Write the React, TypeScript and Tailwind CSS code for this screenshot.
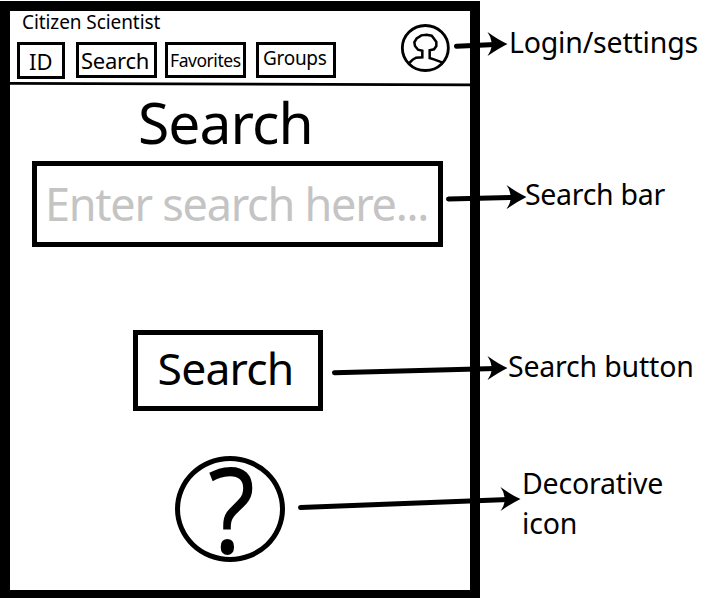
import React from "react";

const navItems = [
  { label: "ID", box: "w-12 h-[37px]", text: "text-[22px] leading-[32px] tracking-[0px] pl-[9px]" },
  { label: "Search", box: "w-[81px] h-9 ml-[11px]", text: "text-[22px] leading-[30px] tracking-[-0.25px] pl-[2px]" },
  { label: "Favorites", box: "w-[81px] h-9 ml-2", text: "text-[17.5px] leading-[30px] tracking-[-0.45px] pl-0.5" },
  { label: "Groups", box: "w-20 h-9 ml-[10px]", text: "text-[19px] leading-[26px] tracking-[-0.3px] pl-1" },
];

function NavBar() {
  return (
    <nav className="flex items-start pl-[7px] mt-[9px]">
      {navItems.map((item) => (
        <div key={item.label} className={`shrink-0 border-[3px] border-black ${item.box}`}>
          <div className={`whitespace-nowrap ${item.text}`}>{item.label}</div>
        </div>
      ))}
    </nav>
  );
}

function UserIcon() {
  return (
    <svg className="mt-3 mr-5 h-[50px] w-[50px] shrink-0" viewBox="0 0 150 150" fill="none" stroke="black">
      <ellipse cx="76" cy="75" rx="69" ry="67.5" strokeWidth="8.5" />
      <path
        d="M28 120 L38 110 L48 104 L67 103 L67 83 L54 80 L45 69 L43 58 L50 46 L64 37 L80 35 L95 38 L101 46 L109 57 L109 69 L102 79 L89 82 L89 105 L104 110 L120 116 L130 120"
        strokeWidth="7.5"
      />
    </svg>
  );
}

type ArrowProps = { x1: number; y1: number; x2: number; y2: number };

function Arrow({ x1, y1, x2, y2 }: ArrowProps) {
  return (
    <g>
      <line x1={x1} y1={y1} x2={x2 - 12} y2={y2 + 0.4} stroke="black" strokeWidth="5" strokeLinecap="round" />
      <path
        d={`M${x2} ${y2} Q${x2 - 9} ${y2 - 4} ${x2 - 20} ${y2 - 12} Q${x2 - 16.5} ${y2 - 7} ${x2 - 16} ${y2 - 2} L${x2 - 16} ${y2 + 3} Q${x2 - 16.5} ${y2 + 7} ${x2 - 20} ${y2 + 12} Q${x2 - 9} ${y2 + 4.5} ${x2} ${y2} Z`}
        fill="black"
      />
    </g>
  );
}

function Arrows() {
  return (
    <svg className="pointer-events-none absolute inset-0" width="710" height="598" viewBox="0 0 710 598">
      <Arrow x1={456.5} y1={46.3} x2={507.5} y2={44} />
      <Arrow x1={448.5} y1={199} x2={526.5} y2={197} />
      <Arrow x1={334.5} y1={372.8} x2={507.5} y2={368} />
      <Arrow x1={300.5} y1={507.5} x2={520.5} y2={499} />
    </svg>
  );
}

export default function App() {
  return (
    <div className="relative flex h-[598px] w-[710px] overflow-hidden bg-white pt-px font-['Noto_Sans','Open_Sans',sans-serif] text-black">
      <main className="flex h-[597px] w-[480px] shrink-0 flex-col border-[10px] border-b-8 border-black">
        <header className="flex h-[71px] shrink-0 justify-between">
          <div>
            <div className="pl-3 text-[19px] leading-[22px] tracking-[-0.08px]">Citizen Scientist</div>
            <NavBar />
          </div>
          <UserIcon />
        </header>
        <svg className="h-[5px] w-full shrink-0" viewBox="0 0 460 5">
          <path d="M0 1.4 L460 2.9" stroke="black" strokeWidth="2.8" />
        </svg>
        <h1 className="h-[74px] pl-[128px] text-[57px] leading-[71px] tracking-[-0.95px]">Search</h1>
        <div className="ml-[22px] h-[86px] w-[411px] shrink-0 border-[5px] border-black pl-[8px] text-[45px] leading-[76px] tracking-[-1.25px] whitespace-nowrap text-[#c4c4c4]">
          Enter search here...
        </div>
        <div className="mt-[83px] ml-[123px] h-[81px] w-[190px] shrink-0 border-[5px] border-black pl-[19.5px] text-[44.5px] leading-[66px] tracking-[-0.8px]">
          Search
        </div>
        <div className="mt-[45px] ml-[165px] flex h-[106px] w-[110px] shrink-0 justify-center rounded-[50%] border-[5px] border-black text-[118px] leading-[94px]">
          <span className="block translate-x-[2px] scale-x-[0.92]">?</span>
        </div>
      </main>
      <aside className="text-[28.5px] leading-[40px] whitespace-nowrap">
        <div className="mt-[21px] ml-[29px] tracking-[-0.2px]">Login/settings</div>
        <div className="mt-[112px] ml-[45px] tracking-[-0.3px]">Search bar</div>
        <div className="mt-[132px] ml-[28px] tracking-[-0.2px]">Search button</div>
        <div className="mt-[77px] ml-[42px] tracking-[-0.2px]">
          Decorative
          <br />
          icon
        </div>
      </aside>
      <Arrows />
    </div>
  );
}
